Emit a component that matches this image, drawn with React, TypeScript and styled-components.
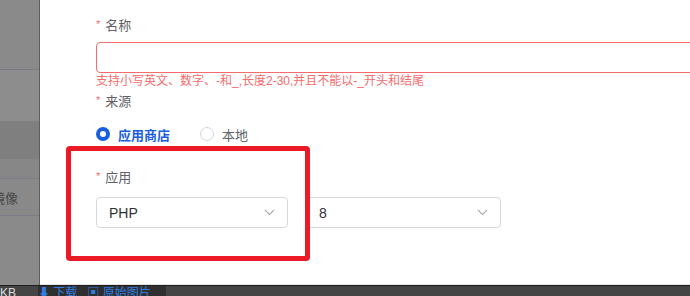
import React from "react";
import styled, { createGlobalStyle } from "styled-components";

const Global = createGlobalStyle`
  html, body { margin: 0; padding: 0; width: 690px; height: 296px; overflow: hidden; background: #fff; }
  * { box-sizing: border-box; }
  body { font-family: "Liberation Sans", "Noto Sans CJK SC", sans-serif; }
`;

const Screen = styled.div`
  width: 690px;
  height: 296px;
  display: flex;
  flex-direction: column;
  overflow: hidden;
`;

const Main = styled.div`
  display: flex;
  height: 285px;
`;

const Sidebar = styled.div`
  width: 40px;
  display: flex;
  flex-direction: column;
  background: #8a8a8a;
  border-right: 1px solid #5e5e5e;
`;

const SideRow = styled.div<{ $h: number; $bg: string; $line?: boolean }>`
  height: ${(p) => p.$h}px;
  background: ${(p) => p.$bg};
  border-bottom: ${(p) => (p.$line ? "1px solid #7b7b88" : "none")};
  display: flex;
  align-items: center;
  justify-content: flex-start;
  font-size: 13px;
  color: #474747;
  overflow: hidden;
  white-space: nowrap;
`;

const SideText = styled.span`
  margin-left: -8px;
`;

const Panel = styled.div`
  position: relative;
  flex: 1;
  background: #fff;
  padding: 16px 0 0 56px;
  overflow: hidden;
  border-bottom: 1px solid #e4e4e4;
`;

const Label = styled.div<{ $mt?: number }>`
  height: 20px;
  line-height: 20px;
  font-size: 13px;
  color: #606266;
  margin-top: ${(p) => p.$mt ?? 0}px;
  display: flex;
  align-items: center;
  gap: 5px;
`;

const Star = styled.span`
  color: #f56c6c;
  font-size: 11px;
  margin-top: -5px;
`;

const TextInput = styled.div`
  margin-top: 6px;
  width: 620px;
  height: 31px;
  border: 1px solid #f56c6c;
  border-radius: 4px;
`;

const ErrorText = styled.div`
  height: 16px;
  line-height: 16px;
  font-size: 12px;
  color: #f56c6c;
  margin-bottom: 3px;
`;

const RadioGroup = styled.div`
  margin-top: 12px;
  display: flex;
  align-items: center;
  gap: 30px;
  height: 20px;
`;

const RadioItem = styled.div<{ $checked?: boolean }>`
  display: flex;
  align-items: center;
  gap: 8px;
  font-size: 13px;
  font-weight: ${(p) => (p.$checked ? 600 : 400)};
  color: ${(p) => (p.$checked ? "#1a5ee0" : "#606266")};
`;

const RadioDot = styled.span<{ $checked?: boolean }>`
  width: 14px;
  height: 14px;
  border-radius: 50%;
  border: ${(p) => (p.$checked ? "4px solid #1a5ee0" : "1px solid #d4d7de")};
  background: #fff;
`;

const SelectRow = styled.div`
  margin-top: 9px;
  display: flex;
  gap: 18px;
`;

const Select = styled.div<{ $w: number }>`
  width: ${(p) => p.$w}px;
  height: 31px;
  border: 1px solid #d6d8de;
  border-radius: 4px;
  display: flex;
  align-items: center;
  justify-content: space-between;
  padding: 0 12px 0 12px;
  font-size: 14px;
  color: #303133;
`;

const Annotation = styled.div`
  position: absolute;
  left: 26px;
  top: 146px;
  width: 244px;
  height: 115px;
  border: 5px solid #ec1a26;
  border-radius: 4px;
  pointer-events: none;
`;

const BottomBar = styled.div`
  height: 11px;
  background: #444;
  border-top: 1px solid #1e1e1e;
  display: flex;
  align-items: flex-start;
  overflow: hidden;
  font-size: 12px;
  line-height: 10px;
`;

const BarText = styled.span<{ $color: string }>`
  color: ${(p) => p.$color};
  white-space: nowrap;
  padding-top: 2px;
`;

const BarGroup = styled.div`
  margin-left: 22px;
  width: 128px;
  height: 10px;
  background: #2f2f2f;
  display: flex;
  gap: 10px;
  padding-left: 0;
`;

const Chevron = () => (
  <svg width="11" height="7" viewBox="0 0 11 7" fill="none">
    <path d="M1 1l4.5 4.5L10 1" stroke="#a8abb2" strokeWidth="1.1" />
  </svg>
);

export default function App() {
  return (
    <Screen>
      <Global />
      <Main>
        <Sidebar>
          <SideRow $h={70} $bg="#8a8a8a" $line />
          <SideRow $h={51} $bg="#8d8d8d" />
          <SideRow $h={38} $bg="#7f7f7f" />
          <SideRow $h={20} $bg="#878787" $line />
          <SideRow $h={37} $bg="#898989" $line>
            <SideText>镜像</SideText>
          </SideRow>
          <SideRow $h={69} $bg="#8a8a8a" />
        </Sidebar>
        <Panel>
          <Label>
            <Star>*</Star>名称
          </Label>
          <TextInput />
          <ErrorText>支持小写英文、数字、-和_,长度2-30,并且不能以-_开头和结尾</ErrorText>
          <Label>
            <Star>*</Star>来源
          </Label>
          <RadioGroup>
            <RadioItem $checked>
              <RadioDot $checked />
              应用商店
            </RadioItem>
            <RadioItem>
              <RadioDot />
              本地
            </RadioItem>
          </RadioGroup>
          <Label $mt={24}>
            <Star>*</Star>应用
          </Label>
          <SelectRow>
            <Select $w={192}>
              PHP
              <Chevron />
            </Select>
            <Select $w={195}>
              8
              <Chevron />
            </Select>
          </SelectRow>
          <Annotation />
        </Panel>
      </Main>
      <BottomBar>
        <BarText $color="#ddd">KB</BarText>
        <BarGroup>
          <BarText $color="#2f7de1">⬇ 下载</BarText>
          <BarText $color="#2f7de1">▣ 原始图片</BarText>
        </BarGroup>
      </BottomBar>
    </Screen>
  );
}
